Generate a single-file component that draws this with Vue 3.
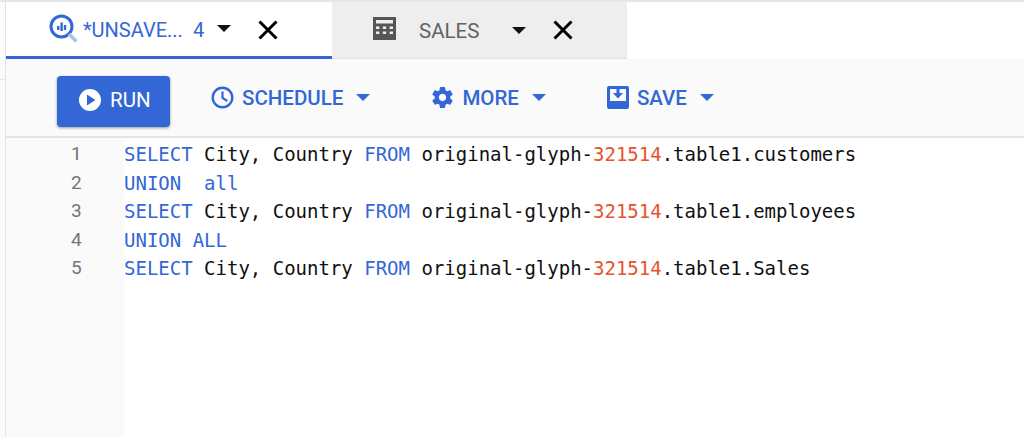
<template>
  <div class="page">
    <aside class="rail"><div class="rail-top"></div></aside>
    <main class="main">
      <nav class="tabs">
        <div class="tab active">
          <svg class="tab-icon" width="30" height="30" viewBox="0 0 30 30">
            <circle cx="13.5" cy="12.5" r="10.5" fill="none" stroke="#3367d6" stroke-width="3"/>
            <path d="M21 20l7.5 7.5" stroke="#a9c2ee" stroke-width="3.5" fill="none"/>
            <path d="M9 12h2.4v4H9zM12.4 8.5h2.4V17h-2.4zM15.8 11h2.4v5h-2.4z" fill="#3367d6"/>
          </svg>
          <span class="tab-name">*UNSAVE...</span>
          <span class="tab-count">4</span>
          <svg class="caret" width="14" height="7" viewBox="0 0 14 7"><path d="M0 0h14L7 7z" fill="#111"/></svg>
          <svg class="close" width="22" height="22" viewBox="0 0 22 22"><path d="M2.5 2.5l17 17M19.5 2.5l-17 17" stroke="#000" stroke-width="3" fill="none"/></svg>
        </div>
        <div class="tab inactive">
          <svg class="calc" width="23" height="23" viewBox="0 0 23 23">
            <path fill-rule="evenodd" fill="#555" d="M0 0h23v23H0zM3 3v3.500h17V3zM3 9.500v2.600h3.400V9.500zM9.800 9.500v2.600h3.400V9.500zM16.600 9.500v2.600H20V9.500zM3 14.500v2.600h3.400v-2.600zM9.800 14.500v2.600h3.400v-2.600zM16.600 14.500v2.600H20v-2.600z"/>
          </svg>
          <span class="tab-name grey">SALES</span>
          <svg class="caret c2" width="14" height="7" viewBox="0 0 14 7"><path d="M0 0h14L7 7z" fill="#111"/></svg>
          <svg class="close c3" width="22" height="22" viewBox="0 0 22 22"><path d="M2.5 2.5l17 17M19.5 2.5l-17 17" stroke="#000" stroke-width="3" fill="none"/></svg>
        </div>
      </nav>
      <div class="toolbar">
        <button class="run">
          <svg width="22" height="22" viewBox="0 0 22 22"><path fill-rule="evenodd" fill="#fff" d="M11 0a11 11 0 1 0 0 22a11 11 0 1 0 0-22zM8 5.500l8.500 5.500L8 16.500z"/></svg>
          <span>RUN</span>
        </button>
        <button class="act schedule">
          <svg width="23" height="23" viewBox="0 0 23 23"><circle cx="11.500" cy="11.500" r="9.800" fill="none" stroke="#3367d6" stroke-width="2.400"/><path d="M11.500 5.500v6.500l4.800 3" fill="none" stroke="#3367d6" stroke-width="2.200"/></svg>
          <span>SCHEDULE</span>
          <svg class="dd" width="14" height="7" viewBox="0 0 14 7"><path d="M0 0h14L7 7z" fill="#3367d6"/></svg>
        </button>
        <button class="act more">
          <svg width="25" height="25" viewBox="0 0 24 24"><path fill="#3367d6" d="M19.430 12.980c.04-.32.07-.64.070-.98s-.03-.66-.07-.98l2.110-1.650c.19-.15.240-.42.120-.64l-2-3.460c-.12-.22-.39-.3-.61-.22l-2.490 1c-.52-.4-1.080-.73-1.690-.98l-.38-2.650A.488.488 0 0 0 14 2h-4c-.25 0-.46.180-.49.420l-.38 2.650c-.61.25-1.170.59-1.690.98l-2.490-1c-.23-.09-.49 0-.61.220l-2 3.460c-.13.220-.07.490.12.640l2.110 1.650c-.04.320-.07.650-.07.980s.03.660.07.980l-2.110 1.650c-.19.150-.24.420-.12.640l2 3.460c.12.220.39.300.61.220l2.490-1c.52.400 1.080.730 1.690.980l.38 2.650c.03.240.24.420.49.420h4c.25 0 .46-.180.49-.420l.38-2.650c.61-.250 1.170-.590 1.690-.980l2.490 1c.23.090.49 0 .61-.220l2-3.460c.12-.220.07-.490-.12-.640l-2.110-1.650zM12 15.500c-1.930 0-3.500-1.570-3.500-3.500s1.570-3.500 3.500-3.500 3.500 1.570 3.500 3.500-1.570 3.500-3.500 3.500z"/></svg>
          <span>MORE</span>
          <svg class="dd" width="14" height="7" viewBox="0 0 14 7"><path d="M0 0h14L7 7z" fill="#3367d6"/></svg>
        </button>
        <button class="act save">
          <svg width="22" height="23" viewBox="0 0 22 23"><path fill-rule="evenodd" fill="#3367d6" d="M2 0h18a2 2 0 0 1 2 2v19a2 2 0 0 1-2 2H2a2 2 0 0 1-2-2V2a2 2 0 0 1 2-2zM3 3v12h16V3z"/><path fill="#3367d6" d="M9.500 2h3v5h3.500l-5 5.500L6 7h3.500z"/></svg>
          <span>SAVE</span>
          <svg class="dd" width="14" height="7" viewBox="0 0 14 7"><path d="M0 0h14L7 7z" fill="#3367d6"/></svg>
        </button>
      </div>
      <div class="editor">
        <div class="gutter"><div v-for="n in 5" :key="n" class="num">{{ n }}</div></div>
        <div class="code">
          <div v-for="(line, i) in lines" :key="i" class="line"><span v-for="(p, j) in line" :key="j" :class="p[0]">{{ p[1] }}</span></div>
        </div>
      </div>
    </main>
  </div>
</template>

<script setup>
const sel = (table) => [
  ['k', 'SELECT'], ['t', ' City, Country '], ['k', 'FROM'], ['t', ' original-glyph-'],
  ['n', '321514'], ['t', '.table1.' + table]
]
const lines = [
  sel('customers'),
  [['k', 'UNION  all']],
  sel('employees'),
  [['k', 'UNION ALL']],
  sel('Sales')
]
</script>

<style>
html, body { margin: 0; background: #fff; overflow: hidden; }
</style>

<style scoped>
.page { display: flex; width: 1024px; height: 437px; box-sizing: border-box; border-top: 2px solid #e6e6e6; font-family: Roboto, sans-serif; overflow: hidden; }
.rail { width: 6px; flex: none; box-sizing: border-box; border-right: 1px solid #e4e4e4; background: #fbfbfb; }
.rail-top { height: 77px; border-bottom: 1px solid #e4e4e4; }
.main { flex: 1; display: flex; flex-direction: column; min-width: 0; }
.tabs { display: flex; height: 57px; flex: none; }
.tab { display: flex; align-items: center; box-sizing: border-box; height: 57px; }
.active { width: 326px; border-bottom: 3px solid #3367d6; padding-left: 42px; padding-top: 2px; }
.inactive { width: 295px; background: #eeeeee; padding-left: 41px; border-bottom: 1px solid #e2e2e2; }
.tab-icon { margin-top: -3px; }
.calc { margin-top: -3px; }
.tab-name { font-size: 20px; color: #3367d6; margin-left: 5px; white-space: nowrap; width: 110px; }
.tab-name.grey { color: #5f6368; margin-left: 23px; width: 80px; padding-top: 2px; font-size: 20.500px; }
.tab-count { font-size: 20px; color: #3367d6; margin-left: 0; width: 12px; }
.caret { margin-left: 12px; margin-top: -3px; }
.close { margin-left: 26px; }
.c2 { margin-left: 13px; margin-top: 0; }
.c3 { margin-left: 26px; }
.toolbar { display: flex; align-items: center; height: 79px; flex: none; box-sizing: border-box; background: #fafafa; border-bottom: 2px solid #e4e4e4; padding-left: 51px; }
button { border: 0; background: none; font-family: inherit; font-size: 20.500px; font-weight: 500; padding: 0; display: flex; align-items: center; cursor: pointer; }
.run { width: 113px; height: 51px; background: #3367d6; color: #fff; border-radius: 4px; box-shadow: 0 1px 3px rgba(0,0,0,.4); padding: 0 0 3px 22px; gap: 9px; font-weight: 400; margin-top: 8px; }
.act { color: #3367d6; font-weight: 500; }
.act span { margin-left: 8px; }
.dd { margin-left: 13px; }
.schedule { margin-left: 41px; }
.more { margin-left: 60px; }
.more span { margin-left: 7px; }
.save { margin-left: 61px; }
.editor { flex: 1; display: flex; min-height: 0; }
.gutter { width: 118px; flex: none; background: #fafafa; padding-top: 2px; box-sizing: border-box; }
.num { height: 28.500px; line-height: 28.500px; font-size: 19px; color: #757575; padding-left: 65px; }
.code { padding-top: 2px; font-family: "DejaVu Sans Mono", monospace; font-size: 19px; color: #111; }
.line { height: 28.500px; line-height: 28.500px; white-space: pre; }
.k { color: #3367d6; }
.n { color: #e8532b; }
</style>
